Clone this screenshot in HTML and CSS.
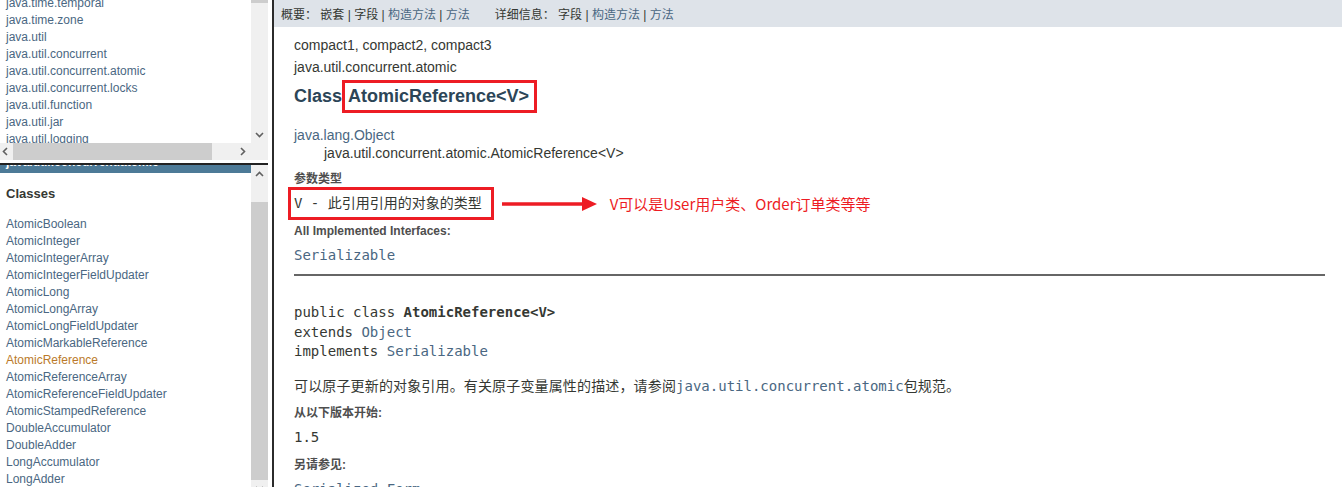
FILE: index.html
```html
<!DOCTYPE html>
<html lang="zh-CN">
<head>
    <meta charset="UTF-8">
    <meta name="viewport" content="width=device-width, initial-scale=1.0">
    <title>AtomicReference (Java Platform SE 8)</title>
    <link rel="stylesheet" href="styles.css">
</head>
<body>
<div class="frameset">
    <div class="side">
        <div class="pane pane-packages">
            <div class="pane-view">
                <ul class="index-list package-list">
                    <li>java.time.temporal</li>
                    <li>java.time.zone</li>
                    <li>java.util</li>
                    <li>java.util.concurrent</li>
                    <li>java.util.concurrent.atomic</li>
                    <li>java.util.concurrent.locks</li>
                    <li>java.util.function</li>
                    <li>java.util.jar</li>
                    <li>java.util.logging</li>
                </ul>
            </div>
            <div class="vbar">
                <div class="thumb thumb-top"></div>
                <div class="sb-btn"><svg width="9" height="6" viewBox="0 0 9 6"><path d="M1 1l3.5 3.5L8 1" fill="none" stroke="#606060" stroke-width="1.6"/></svg></div>
            </div>
            <div class="hbar">
                <div class="sb-btn sb-left"><svg width="6" height="9" viewBox="0 0 6 9"><path d="M5 1L1.5 4.5 5 8" fill="none" stroke="#606060" stroke-width="1.6"/></svg></div>
                <div class="thumb hthumb"></div>
                <div class="sb-btn sb-right"><svg width="6" height="9" viewBox="0 0 6 9"><path d="M1 1l3.5 3.5L1 8" fill="none" stroke="#606060" stroke-width="1.6"/></svg></div>
            </div>
            <div class="corner"></div>
        </div>
        <div class="pane pane-classes">
            <div class="pane-view">
                <div class="bar-title"><span>java.util.concurrent.atomic</span></div>
                <h2 class="index-heading">Classes</h2>
                <ul class="index-list">
                    <li>AtomicBoolean</li>
                    <li>AtomicInteger</li>
                    <li>AtomicIntegerArray</li>
                    <li>AtomicIntegerFieldUpdater</li>
                    <li>AtomicLong</li>
                    <li>AtomicLongArray</li>
                    <li>AtomicLongFieldUpdater</li>
                    <li>AtomicMarkableReference</li>
                    <li class="current">AtomicReference</li>
                    <li>AtomicReferenceArray</li>
                    <li>AtomicReferenceFieldUpdater</li>
                    <li>AtomicStampedReference</li>
                    <li>DoubleAccumulator</li>
                    <li>DoubleAdder</li>
                    <li>LongAccumulator</li>
                    <li>LongAdder</li>
                </ul>
            </div>
            <div class="vbar">
                <div class="sb-btn"><svg width="9" height="6" viewBox="0 0 9 6"><path d="M1 5l3.5-3.5L8 5" fill="none" stroke="#606060" stroke-width="1.6"/></svg></div>
                <div class="thumb thumb-classes"></div>
                <div class="sb-btn"><svg width="9" height="6" viewBox="0 0 9 6"><path d="M1 1l3.5 3.5L8 1" fill="none" stroke="#606060" stroke-width="1.6"/></svg></div>
            </div>
        </div>
    </div>

    <div class="main">
        <div class="sub-nav">
            <ul class="sub-nav-list">
                <li>概要：&nbsp;</li>
                <li>嵌套&nbsp;|&nbsp;</li>
                <li>字段&nbsp;|&nbsp;</li>
                <li><a href="#">构造方法</a>&nbsp;|&nbsp;</li>
                <li><a href="#">方法</a></li>
            </ul>
            <ul class="sub-nav-list">
                <li>详细信息：&nbsp;</li>
                <li>字段&nbsp;|&nbsp;</li>
                <li><a href="#">构造方法</a>&nbsp;|&nbsp;</li>
                <li><a href="#">方法</a></li>
            </ul>
        </div>
        <div class="content">
            <div class="sub-title">compact1, compact2, compact3</div>
            <div class="sub-title">java.util.concurrent.atomic</div>
            <h2 class="title">Class<span class="mark-box name-box">AtomicReference&lt;V&gt;</span></h2>
            <ul class="inheritance">
                <li><a href="#">java.lang.Object</a></li>
                <li class="inherit-child">java.util.concurrent.atomic.AtomicReference&lt;V&gt;</li>
            </ul>
            <dl class="type-info">
                <dt class="dt-params">参数类型</dt>
                <dd class="note-row">
                    <span class="mark-box param-box">V - 此引用引用的对象的类型</span>
                    <svg class="note-arrow" width="95" height="16" viewBox="0 0 95 16"><path d="M0 8H83" stroke="#ed1c24" stroke-width="3.5"/><path d="M80 1L95 8 80 15Z" fill="#ed1c24"/></svg>
                    <span class="note-text">V可以是User用户类、Order订单类等等</span>
                </dd>
                <dt class="dt-ifaces">All Implemented Interfaces:</dt>
                <dd><a href="#"><code>Serializable</code></a></dd>
            </dl>
            <hr>
            <pre class="signature">public class <b>AtomicReference&lt;V&gt;</b>
extends <a href="#">Object</a>
implements <a href="#">Serializable</a></pre>
            <div class="block">可以原子更新的对象引用。有关原子变量属性的描述，请参阅<a href="#"><code>java.util.concurrent.atomic</code></a>包规范。</div>
            <dl class="notes">
                <dt>从以下版本开始:</dt>
                <dd><code>1.5</code></dd>
                <dt class="dt-see">另请参见:</dt>
                <dd><a href="#"><code>Serialized Form</code></a></dd>
            </dl>
        </div>
    </div>
</div>
</body>
</html>
```

FILE: styles.css
```css
html, body {
    margin: 0;
    height: 100%;
    overflow: hidden;
    background: #fff;
}
body {
    font-family: "Liberation Sans", Arial, "Noto Sans CJK SC", sans-serif;
    font-size: 14px;
    color: #353833;
}
a {
    color: #4a6782;
    text-decoration: none;
}
code, pre {
    font-family: "DejaVu Sans Mono", "Noto Sans CJK SC", monospace;
    font-size: 14px;
}
.frameset {
    display: flex;
    height: 487px;
}

/* left frames */
.side {
    width: 268px;
    padding-right: 4px;
    flex-shrink: 0;
    display: flex;
    flex-direction: column;
}
.pane {
    display: grid;
    grid-template-columns: 251px 17px;
}
.pane-packages {
    grid-template-rows: 143px 17px;
    height: 160px;
}
.pane-classes {
    margin-top: 3px;
    border-top: 2px solid #222;
    flex: 1;
    min-height: 0;
    overflow: hidden;
}
.pane-view {
    overflow: hidden;
}
.index-list {
    margin: 13.5px 0 0;
    padding: 0;
    list-style: none;
}
.package-list {
    margin-top: -5.5px;
}
.index-list li {
    font-size: 12px;
    line-height: 17px;
    padding-left: 6px;
    white-space: nowrap;
    color: #4a6782;
}
.index-list li.current {
    color: #bb7a2a;
}
.bar-title {
    height: 8px;
    background-color: #4d7a97;
    overflow: hidden;
}
.bar-title span {
    display: block;
    margin-top: -11px;
    padding-left: 6px;
    line-height: 16px;
    font-size: 12px;
    font-weight: bold;
    color: #fff;
    white-space: nowrap;
}
.index-heading {
    margin: 13px 0 0;
    padding-left: 6px;
    font-size: 13px;
    line-height: 16px;
    color: #353833;
}

/* fake scrollbars */
.vbar {
    background-color: #f0f0f0;
    display: flex;
    flex-direction: column;
    justify-content: space-between;
    overflow: hidden;
}
.hbar {
    background-color: #f0f0f0;
    display: flex;
}
.corner {
    background-color: #f0f0f0;
}
.sb-btn {
    width: 17px;
    height: 17px;
    flex-shrink: 0;
    display: flex;
    align-items: center;
    justify-content: center;
}
.sb-left {
    width: 9px;
}
.sb-right {
    margin-left: auto;
}
.thumb {
    background-color: #cdcdcd;
    flex-shrink: 0;
}
.thumb-top {
    height: 3px;
}
.hthumb {
    width: 199px;
    margin-left: 4px;
}
.thumb-classes {
    height: 278px;
    margin-top: 20px;
}

/* right frame */
.main {
    flex: 1;
    min-width: 0;
    border-left: 2px solid #2b2b2b;
    overflow: hidden;
}
.sub-nav {
    height: 27px;
    background-color: #dee3e9;
    display: flex;
    align-items: center;
    padding-left: 7px;
    font-size: 12px;
}
.sub-nav-list {
    display: flex;
    margin: 0 25px 0 0;
    padding: 0;
    list-style: none;
    white-space: pre;
}
.content {
    padding: 0 17px 0 20px;
}
.sub-title {
    line-height: 22px;
}
.sub-title:first-child {
    margin-top: 7px;
}
.title {
    display: flex;
    align-items: center;
    height: 33px;
    margin: 2px 0 0;
    font-size: 18px;
    color: #2c4557;
}
.mark-box {
    border: 3px solid #ed1c24;
    line-height: 27px;
}
.name-box {
    padding: 0 5px 0 3px;
}
.inheritance {
    margin: 13px 0 0;
    padding: 0;
    list-style: none;
    line-height: 18px;
}
.inherit-child {
    padding-left: 30px;
}
dl {
    margin: 0;
}
dd {
    margin: 6px 0 0;
    line-height: 20px;
}
dt {
    font-size: 12px;
    font-weight: bold;
    line-height: 16px;
    color: #4e4e4e;
}
.dt-params {
    margin-top: 9px;
}
.note-row {
    display: flex;
    align-items: center;
    height: 33px;
    margin: 0 0 0 -6px;
}
.param-box {
    display: inline-block;
    padding: 0 9px 0 3px;
    font-family: "DejaVu Sans Mono", "Noto Sans CJK SC", monospace;
    white-space: pre;
}
.note-arrow {
    margin-left: 8px;
    flex-shrink: 0;
}
.note-text {
    margin-left: 13px;
    font-family: "Noto Sans CJK SC", sans-serif;
    font-size: 15px;
    color: #ed1c24;
    white-space: nowrap;
}
.dt-ifaces {
    margin-top: 3px;
}
hr {
    margin: 9px 0 0;
    height: 2px;
    border: 0;
    background-color: #666;
}
.signature {
    margin: 27px 0 0;
    line-height: 19.5px;
}
.block {
    margin-top: 14px;
    line-height: 20px;
    letter-spacing: 0.15px;
}
.block code {
    letter-spacing: 0;
}
.notes dt {
    margin-top: 9.5px;
}
.notes .dt-see {
    margin-top: 10px;
}
```
